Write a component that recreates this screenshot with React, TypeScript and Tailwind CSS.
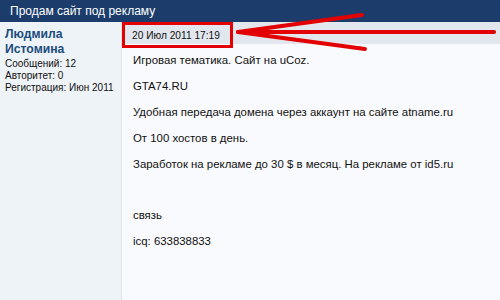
const lines = [
  "Игровая тематика. Сайт на uCoz.",
  "GTA74.RU",
  "Удобная передача домена через аккаунт на сайте atname.ru",
  "От 100 хостов в день.",
  "Заработок на рекламе до 30 $ в месяц. На рекламе от id5.ru",
];

export default function App() {
  return (
    <div className="relative w-[500px] h-[300px] overflow-hidden bg-[#f9fafd] font-['Liberation_Sans',sans-serif]">
      <div className="h-[22px] bg-[#1c3d6b] pl-[10px] text-[12px] leading-[22px] text-white">
        Продам сайт под рекламу
      </div>
      <div className="flex h-[278px]">
        <aside className="w-[122px] shrink-0 border-r border-[#dfe3ea] bg-[#eef3f8] pl-[5px] pt-[5px]">
          <div className="text-[12.2px] font-bold leading-[15px] text-[#1b4c7c]">Людмила</div>
          <div className="text-[12.2px] font-bold leading-[15px] text-[#1b4c7c]">Истомина</div>
          <div className="mt-[1px] text-[10px] leading-[12px] text-[#111]">
            <div>Сообщений: 12</div>
            <div>Авторитет: 0</div>
            <div>Регистрация: Июн 2011</div>
          </div>
        </aside>
        <main className="flex-1">
          <div className="relative h-[22px] bg-[#e2e6ed]">
            <span className="pl-[10px] text-[10.2px] leading-[24px] text-[#111]">20 Июл 2011 17:19</span>
            <div className="absolute left-0 top-0 h-[26px] w-[111px] border-[3px] border-[#e30000]" />
          </div>
          <div className="flex flex-col gap-[12px] pl-[11px] pt-[9px] text-[11.4px] leading-[14px] text-[#111]">
            {lines.map((l) => (
              <p key={l}>{l}</p>
            ))}
            <p className="mt-[25px]">связь</p>
            <p>icq: 633838833</p>
          </div>
        </main>
      </div>
      <svg className="absolute left-0 top-0" width="500" height="300" viewBox="0 0 500 300">
        <g stroke="#e30000" strokeLinecap="round" fill="none">
          <line x1="240" y1="32" x2="494" y2="32" strokeWidth="4" />
          <line x1="238" y1="32" x2="362" y2="15" strokeWidth="4" />
          <line x1="238" y1="32" x2="365" y2="49" strokeWidth="4" />
        </g>
      </svg>
    </div>
  );
}
